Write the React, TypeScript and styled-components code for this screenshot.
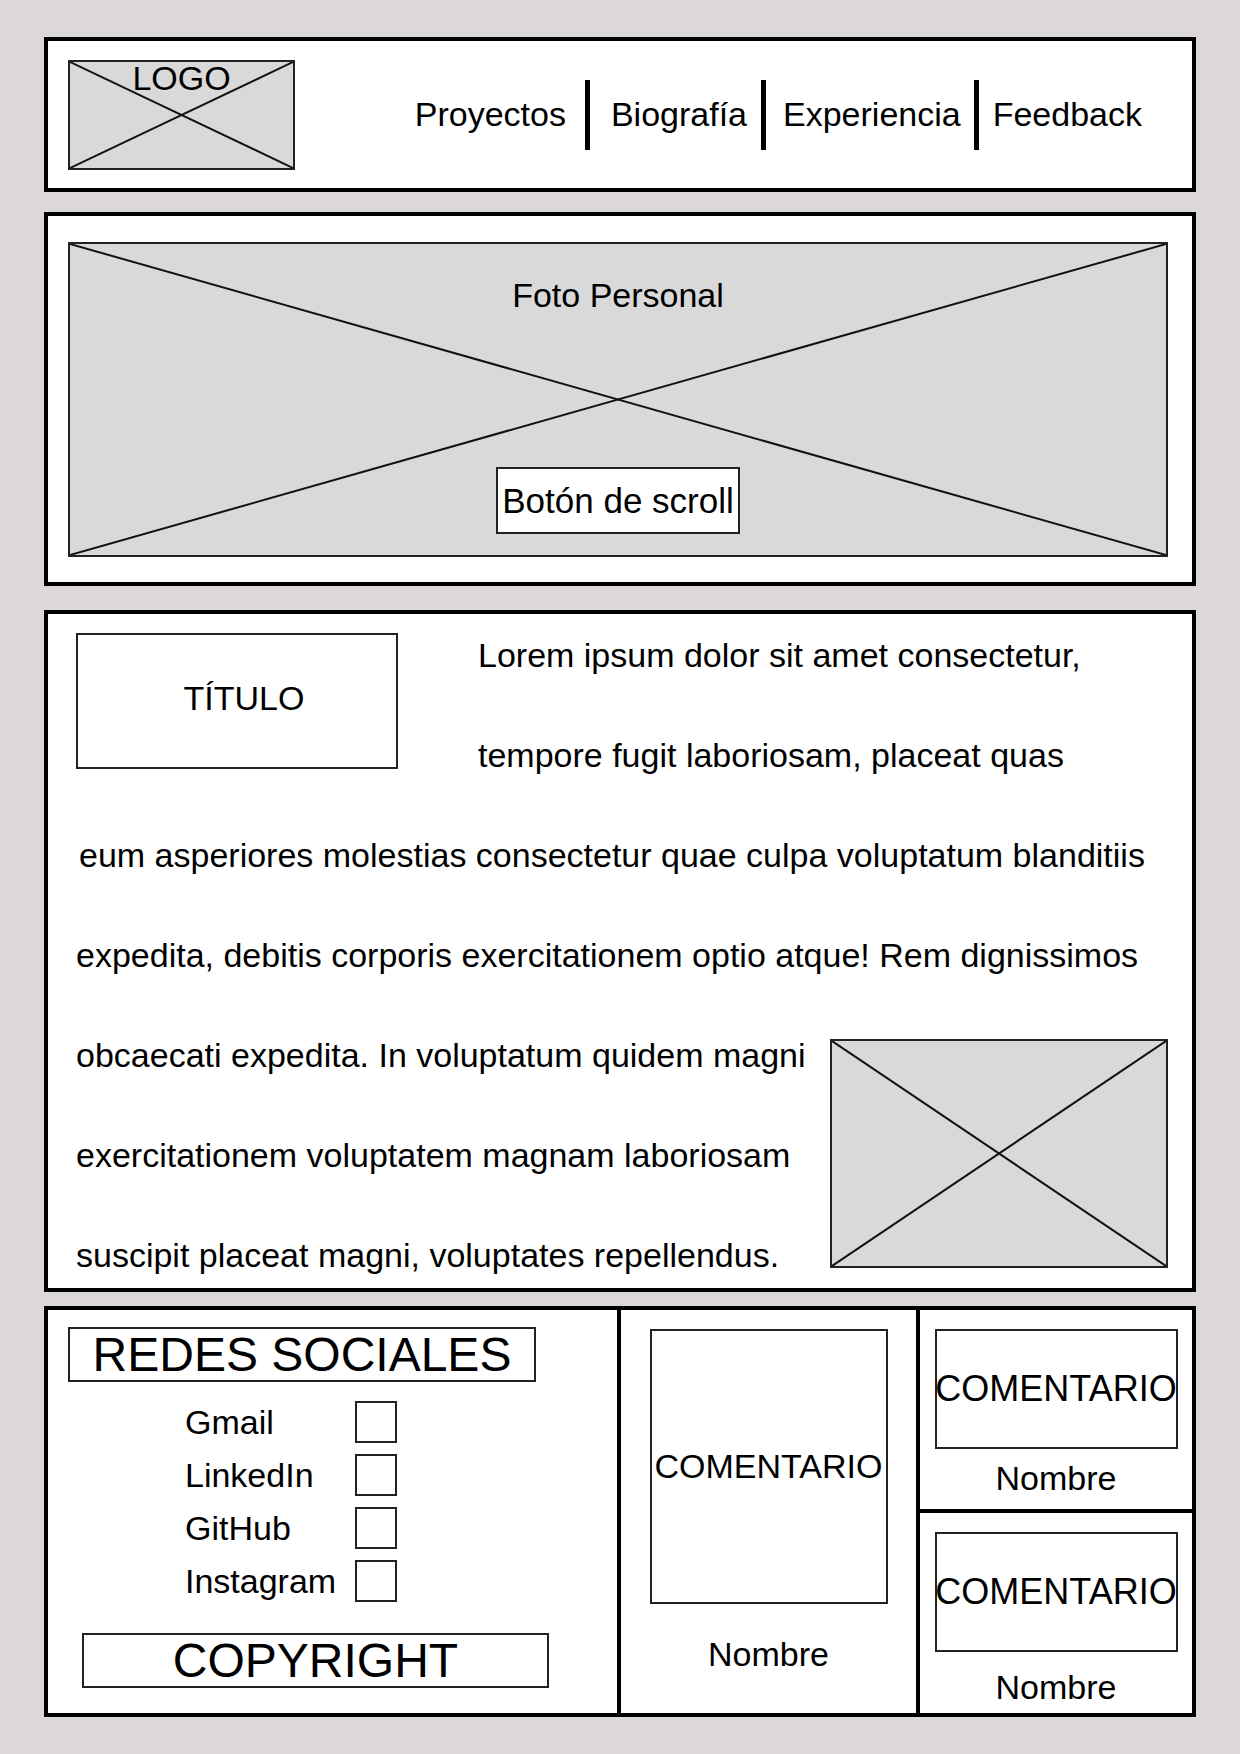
import styled, { createGlobalStyle } from "styled-components";
import type { ReactNode } from "react";

const GlobalStyle = createGlobalStyle`
  * {
    box-sizing: border-box;
  }

  body {
    margin: 0;
    background: #dcd8d7;
    color: #000;
    font-family: "Liberation Sans", Arial, sans-serif;
  }
`;

// spacing around each divider differs a little in the mockup
const navItems = [
  { label: "Proyectos", before: 0, after: 0 },
  { label: "Biografía", before: 19, after: 21 },
  { label: "Experiencia", before: 14, after: 17 },
  { label: "Feedback", before: 13, after: 14 },
];
const socials = ["Gmail", "LinkedIn", "GitHub", "Instagram"];

const Crossed = ({
  w,
  h,
  children,
  className,
}: {
  w?: number;
  h: number;
  children?: ReactNode;
  className?: string;
}) => (
  <Placeholder $w={w} $h={h} className={className}>
    <CrossLines viewBox="0 0 100 100" preserveAspectRatio="none" aria-hidden>
      <line x1="0" y1="0" x2="100" y2="100" vectorEffect="non-scaling-stroke" />
      <line x1="100" y1="0" x2="0" y2="100" vectorEffect="non-scaling-stroke" />
    </CrossLines>
    {children}
  </Placeholder>
);

const App = () => {
  return (
    <>
      <GlobalStyle />
      <Page>
        <Header>
          <Crossed w={227} h={110}>
            <LogoText>LOGO</LogoText>
          </Crossed>
          <Nav>
            {navItems.map((item, i) => (
              <NavGroup key={item.label}>
                {i > 0 && <NavDivider $before={item.before} $after={item.after} />}
                <NavLink href="#">{item.label}</NavLink>
              </NavGroup>
            ))}
          </Nav>
        </Header>

        <Hero>
          <HeroImage h={315}>
            <HeroCaption>Foto Personal</HeroCaption>
            <ScrollButton type="button">Botón de scroll</ScrollButton>
          </HeroImage>
        </Hero>

        <Article>
          <TopRow>
            <TitleBox>TÍTULO</TitleBox>
            <LineStack>
              <TextLine>Lorem ipsum dolor sit amet consectetur,</TextLine>
              <TextLine>tempore fugit laboriosam, placeat quas</TextLine>
            </LineStack>
          </TopRow>
          <TextLine $indent={3}>
            eum asperiores molestias consectetur quae culpa voluptatum blanditiis
          </TextLine>
          <TextLine>
            expedita, debitis corporis exercitationem optio atque! Rem dignissimos
          </TextLine>
          <BottomRow>
            <LineStack>
              <TextLine>obcaecati expedita. In voluptatum quidem magni</TextLine>
              <TextLine>exercitationem voluptatem magnam laboriosam</TextLine>
              <TextLine>suscipit placeat magni, voluptates repellendus.</TextLine>
            </LineStack>
            <ArticleImage w={338} h={229} />
          </BottomRow>
        </Article>

        <Footer>
          <SocialCol>
            <OutlinedHeading $w={468}>REDES SOCIALES</OutlinedHeading>
            <SocialList>
              {socials.map((name) => (
                <SocialRow key={name}>
                  <SocialLabel>{name}</SocialLabel>
                  <CheckBox />
                </SocialRow>
              ))}
            </SocialList>
            <OutlinedHeading $w={467} $ml={14}>
              COPYRIGHT
            </OutlinedHeading>
          </SocialCol>

          <CommentCol>
            <CommentBox $w={238} $h={275} $size={34}>
              COMENTARIO
            </CommentBox>
            <Name $mt={34}>Nombre</Name>
          </CommentCol>

          <StackedCol>
            <CommentCell $divider>
              <CommentBox $w={243} $h={120} $size={36}>
                COMENTARIO
              </CommentBox>
              <Name $mt={13}>Nombre</Name>
            </CommentCell>
            <CommentCell>
              <CommentBox $w={243} $h={120} $size={36}>
                COMENTARIO
              </CommentBox>
              <Name $mt={19}>Nombre</Name>
            </CommentCell>
          </StackedCol>
        </Footer>
      </Page>
    </>
  );
};

const Page = styled.div`
  width: 1240px;
  padding: 37px 44px;
  display: flex;
  flex-direction: column;
`;

const Panel = styled.section`
  background: #fff;
  border: 4px solid #000;
`;

const Placeholder = styled.div<{ $w?: number; $h: number }>`
  position: relative;
  width: ${(p) => (p.$w ? `${p.$w}px` : "auto")};
  height: ${(p) => p.$h}px;
  flex-shrink: 0;
  background: #d9d9d9;
  border: 2px solid #222;
`;

const CrossLines = styled.svg`
  position: absolute;
  inset: 0;
  width: 100%;
  height: 100%;
  stroke: #111;
  stroke-width: 2;

  & + * {
    position: relative;
  }
`;

/* header */

const Header = styled(Panel)`
  height: 155px;
  padding-left: 20px;
  display: flex;
  align-items: center;
  justify-content: space-between;
`;

const LogoText = styled.div`
  position: relative;
  font-size: 34px;
  line-height: 33px;
  text-align: center;
`;

const Nav = styled.nav`
  display: flex;
  align-items: center;
  margin-right: 50px;
`;

const NavGroup = styled.div`
  display: flex;
  align-items: center;
`;

const NavLink = styled.a`
  font-size: 34px;
  color: #000;
  text-decoration: none;
`;

const NavDivider = styled.span<{ $before: number; $after: number }>`
  width: 5px;
  height: 70px;
  margin: 0 ${(p) => p.$after}px 0 ${(p) => p.$before}px;
  background: #000;
`;

/* hero */

const Hero = styled(Panel)`
  margin-top: 20px;
  padding: 26px 24px 25px 20px;
`;

const HeroImage = styled(Crossed)`
  display: flex;
  flex-direction: column;
  align-items: center;
  justify-content: space-between;
  padding: 35px 0 21px;
`;

const HeroCaption = styled.div`
  font-size: 34px;
  line-height: 33px;
`;

const ScrollButton = styled.button`
  position: relative;
  width: 244px;
  height: 67px;
  padding: 0;
  background: #fff;
  border: 2px solid #222;
  font-family: inherit;
  font-size: 35px;
  color: #000;
  white-space: nowrap;
`;

/* article */

const Article = styled(Panel)`
  margin-top: 24px;
  padding: 8px 24px 0 28px;
  display: flex;
  flex-direction: column;
  gap: 34px;
`;

const TopRow = styled.div`
  display: flex;
  align-items: flex-start;
  gap: 80px;
`;

const TitleBox = styled.div`
  margin-top: 11px;
  width: 322px;
  height: 136px;
  flex-shrink: 0;
  border: 2px solid #222;
  padding: 0 0 6px 14px;
  display: flex;
  align-items: center;
  justify-content: center;
  font-size: 34px;
`;

const LineStack = styled.div`
  display: flex;
  flex-direction: column;
  gap: 34px;
`;

const TextLine = styled.p<{ $indent?: number }>`
  margin: 0;
  padding-left: ${(p) => p.$indent ?? 0}px;
  font-size: 34px;
  line-height: 66px;
  white-space: nowrap;
`;

const BottomRow = styled.div`
  display: flex;
  align-items: flex-start;
  justify-content: space-between;
`;

const ArticleImage = styled(Crossed)`
  margin-top: 17px;
`;

/* footer */

const Footer = styled(Panel)`
  margin-top: 14px;
  height: 411px;
  display: grid;
  grid-template-columns: 569px 299px 1fr;
`;

const SocialCol = styled.div`
  padding: 17px 0 0 20px;
  display: flex;
  flex-direction: column;
`;

const OutlinedHeading = styled.div<{ $w: number; $ml?: number }>`
  width: ${(p) => p.$w}px;
  height: 55px;
  margin-left: ${(p) => p.$ml ?? 0}px;
  border: 2px solid #222;
  display: flex;
  align-items: center;
  justify-content: center;
  font-size: 48px;
  white-space: nowrap;
`;

const SocialList = styled.div`
  margin: 19px 0 31px 117px;
  display: flex;
  flex-direction: column;
  gap: 11px;
`;

const SocialRow = styled.div`
  display: grid;
  grid-template-columns: 170px 42px;
  align-items: center;
`;

const SocialLabel = styled.span`
  font-size: 34px;
`;

const CheckBox = styled.span`
  width: 42px;
  height: 42px;
  border: 2px solid #222;
`;

const CommentCol = styled.div`
  border-left: 4px solid #000;
  padding-top: 19px;
  display: flex;
  flex-direction: column;
  align-items: center;
`;

const StackedCol = styled.div`
  border-left: 4px solid #000;
  display: grid;
  grid-template-rows: 203px 1fr;
`;

const CommentCell = styled.div<{ $divider?: boolean }>`
  padding-top: 19px;
  display: flex;
  flex-direction: column;
  align-items: center;
  border-bottom: ${(p) => (p.$divider ? "4px solid #000" : "none")};
`;

const CommentBox = styled.div<{ $w: number; $h: number; $size: number }>`
  width: ${(p) => p.$w}px;
  height: ${(p) => p.$h}px;
  border: 2px solid #222;
  display: flex;
  align-items: center;
  justify-content: center;
  font-size: ${(p) => p.$size}px;
  white-space: nowrap;
`;

const Name = styled.div<{ $mt: number }>`
  margin-top: ${(p) => p.$mt}px;
  font-size: 34px;
  line-height: 33px;
`;

export default App;
